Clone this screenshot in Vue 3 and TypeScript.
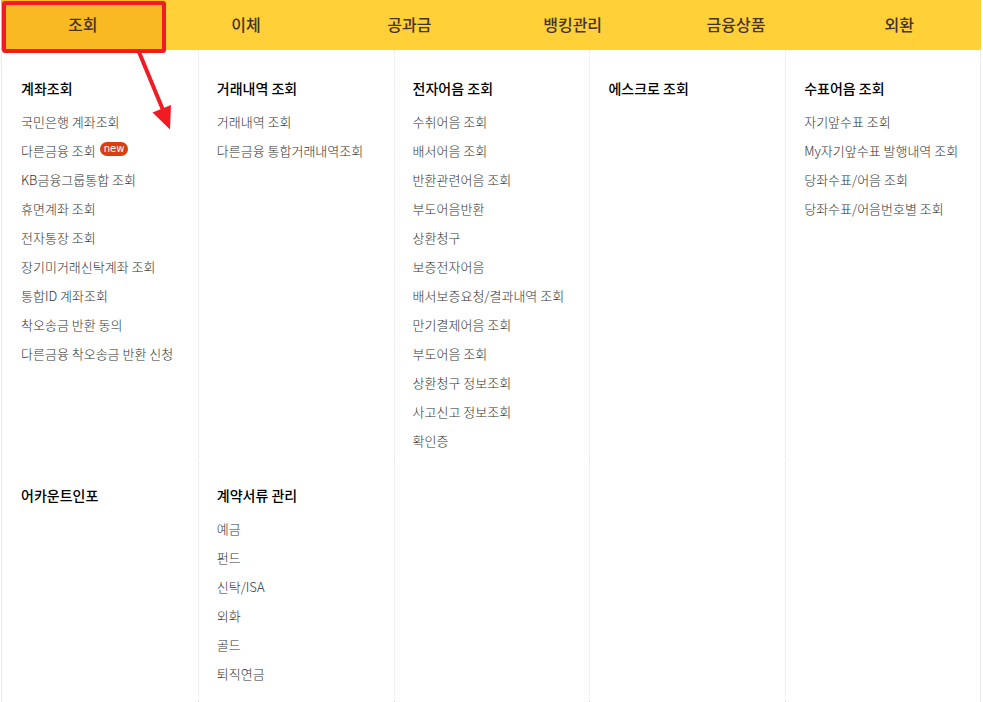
<script setup lang="ts">
interface MenuItem {
  label: string
  isNew?: boolean
}

interface MenuGroup {
  title: string
  items: MenuItem[]
}

const tabs: string[] = ['조회', '이체', '공과금', '뱅킹관리', '금융상품', '외환']
const activeTab = '조회'

const toItems = (...labels: string[]): MenuItem[] => labels.map((label) => ({ label }))

// Five groups per row; null keeps an empty cell so the column rules continue.
const groups: (MenuGroup | null)[] = [
  {
    title: '계좌조회',
    items: [
      { label: '국민은행 계좌조회' },
      { label: '다른금융 조회', isNew: true },
      ...toItems(
        'KB금융그룹통합 조회',
        '휴면계좌 조회',
        '전자통장 조회',
        '장기미거래신탁계좌 조회',
        '통합ID 계좌조회',
        '착오송금 반환 동의',
        '다른금융 착오송금 반환 신청',
      ),
    ],
  },
  { title: '거래내역 조회', items: toItems('거래내역 조회', '다른금융 통합거래내역조회') },
  {
    title: '전자어음 조회',
    items: toItems(
      '수취어음 조회',
      '배서어음 조회',
      '반환관련어음 조회',
      '부도어음반환',
      '상환청구',
      '보증전자어음',
      '배서보증요청/결과내역 조회',
      '만기결제어음 조회',
      '부도어음 조회',
      '상환청구 정보조회',
      '사고신고 정보조회',
      '확인증',
    ),
  },
  { title: '에스크로 조회', items: [] },
  {
    title: '수표어음 조회',
    items: toItems(
      '자기앞수표 조회',
      'My자기앞수표 발행내역 조회',
      '당좌수표/어음 조회',
      '당좌수표/어음번호별 조회',
    ),
  },
  { title: '어카운트인포', items: [] },
  { title: '계약서류 관리', items: toItems('예금', '펀드', '신탁/ISA', '외화', '골드', '퇴직연금') },
  null,
  null,
  null,
]
</script>

<template>
  <div class="page">
    <nav class="tabs">
      <a
        v-for="tab in tabs"
        :key="tab"
        href="#"
        class="tab"
        :class="{ active: tab === activeTab }"
        >{{ tab }}</a
      >
    </nav>

    <main class="groups">
      <section v-for="(group, index) in groups" :key="index" class="group">
        <template v-if="group">
          <h2 class="title"><a href="#">{{ group.title }}</a></h2>
          <ul v-if="group.items.length" class="items">
            <li v-for="item in group.items" :key="item.label" class="item">
              <a href="#">{{ item.label }}</a>
              <span v-if="item.isNew" class="badge">new</span>
            </li>
          </ul>
        </template>
      </section>
    </main>

    <svg class="callout" width="180" height="136" viewBox="0 0 180 136" aria-hidden="true">
      <rect x="4" y="3" width="160" height="48" rx="1" fill="none" stroke="#f01c24" stroke-width="4" />
      <path d="M139 52L163 110" fill="none" stroke="#f01c24" stroke-width="4" />
      <path d="M152.500 112.500L171 105L170 129.500Z" fill="#f01c24" />
    </svg>
  </div>
</template>

<style>
body {
  margin: 0;
  background: #fff;
}
</style>

<style scoped>
.page {
  position: relative;
  display: flex;
  flex-direction: column;
  box-sizing: border-box;
  min-height: 100vh;
  padding: 0 2px 0 1px;
  font-family: 'Noto Sans CJK KR', 'Noto Sans', sans-serif;
}

a {
  color: inherit;
  text-decoration: none;
}

.tabs {
  display: grid;
  grid-template-columns: repeat(6, 1fr);
  background: #ffd038;
}

.tab {
  height: 50px;
  line-height: 48px;
  text-align: center;
  font-size: 16px;
  font-weight: 500;
  color: #46332a;
}

.tab.active {
  background: #f9b923;
}

.groups {
  flex: 1;
  display: grid;
  grid-template-columns: repeat(5, 1fr);
  grid-template-rows: auto 1fr;
  border-left: 1px solid #ececec;
}

.group {
  min-width: 0;
  padding: 25px 0 2px 18px;
  border-left: 1px dotted #e4e4e4;
}

.group:nth-child(5n + 1) {
  padding-left: 19px;
  border-left: 0;
}

.group:nth-child(5n) {
  border-right: 1px solid #ececec;
}

.title {
  margin: 0;
  font-size: 14px;
  line-height: 26px;
  font-weight: 500;
  color: #000;
}

.items {
  margin: 0;
  padding: 6px 0 0;
  list-style: none;
}

.item {
  display: flex;
  align-items: center;
  gap: 4px;
  height: 29px;
  font-size: 13px;
  font-weight: 300;
  color: #333;
  white-space: nowrap;
}

.badge {
  height: 14px;
  margin-bottom: 4px;
  padding: 0 4px;
  border-radius: 7px;
  background: #d8400f;
  color: #fff;
  font-family: 'DejaVu Sans', sans-serif;
  font-size: 10px;
  font-weight: 400;
  line-height: 13px;
}

.callout {
  position: absolute;
  top: 0;
  left: 0;
  pointer-events: none;
}
</style>
